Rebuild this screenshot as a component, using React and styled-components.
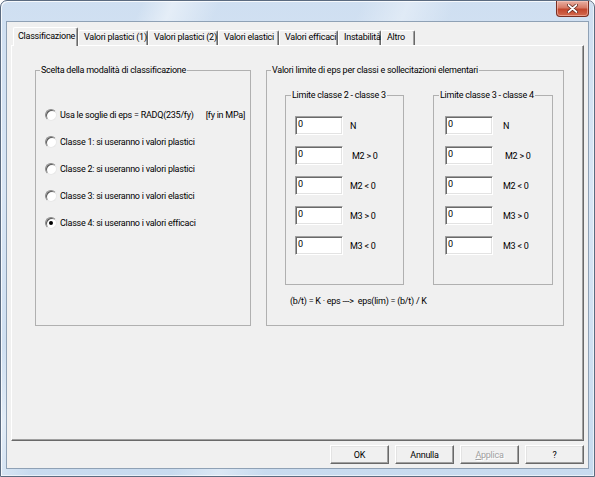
import React from "react";
import styled, { createGlobalStyle } from "styled-components";

const FONT = `Roboto, "Liberation Sans", Arial, sans-serif`;

const GlobalStyle = createGlobalStyle`
  html, body {
    margin: 0;
    padding: 0;
    overflow: hidden;
    background: #fff;
  }
  body {
    font-family: ${FONT};
    font-size: 9px;
    letter-spacing: -0.25px;
    color: #000;
  }
`;

const Window = styled.div`
  box-sizing: border-box;
  width: 595px;
  height: 477px;
  display: flex;
  flex-direction: column;
  padding: 0 5px 7px 5px;
  border: 1px solid #5b6b80;
  border-radius: 7px 7px 0 0;
  background: linear-gradient(
      112deg,
      rgba(255, 255, 255, 0) 0 18%,
      rgba(255, 255, 255, 0.45) 22%,
      rgba(255, 255, 255, 0) 28%,
      rgba(255, 255, 255, 0) 46%,
      rgba(255, 255, 255, 0.35) 52%,
      rgba(255, 255, 255, 0) 58%,
      rgba(255, 255, 255, 0) 100%
    ),
    linear-gradient(#cfdff1, #d9e6f5 40%, #c8dbef);
  box-shadow: inset 1px 1px 0 rgba(255, 255, 255, 0.8),
    inset -1px -1px 0 rgba(255, 255, 255, 0.6);
`;

const TitleBar = styled.div`
  height: 20px;
  display: flex;
  justify-content: flex-end;
  align-items: flex-start;
`;

const CloseButton = styled.div`
  box-sizing: border-box;
  width: 33px;
  height: 16px;
  display: flex;
  align-items: center;
  justify-content: center;
  border: 1px solid #7a2f22;
  border-top: none;
  border-radius: 0 0 4px 4px;
  background: linear-gradient(#e8b0a3, #d77a66 45%, #c2462d 55%, #d36a4e);
  box-shadow: inset 0 0 0 1px rgba(255, 210, 200, 0.5);
`;

const Client = styled.div`
  flex: 1;
  display: flex;
  flex-direction: column;
  border: 1px solid #8fa1b5;
  background: #f0f0f0;
`;

const TabStrip = styled.div`
  height: 23px;
  display: flex;
  align-items: flex-end;
  padding-left: 6px;
`;

const Tab = styled.div`
  box-sizing: border-box;
  position: relative;
  z-index: ${(p) => (p.$active ? 1 : 0)};
  width: ${(p) => p.$w}px;
  height: ${(p) => (p.$active ? 19 : 15)}px;
  margin-bottom: ${(p) => (p.$active ? -1 : 0)}px;
  padding: ${(p) => (p.$active ? "3px 0 0 4px" : "1px 0 0 5px")};
  line-height: 11px;
  white-space: nowrap;
  background: #f0f0f0;
  border-top: 1px solid #fff;
  border-left: 1px solid #fff;
  border-right: 1px solid #696969;
  border-radius: 2px 2px 0 0;
  box-shadow: inset -1px 0 0 #a0a0a0;
`;

const Panel = styled.div`
  box-sizing: border-box;
  height: 396px;
  margin: 0 4px;
  padding: 18px 0 0 23px;
  display: flex;
  align-items: flex-start;
  gap: 15px;
  border-top: 1px solid #fff;
  border-left: 1px solid #fff;
  border-right: 1px solid #696969;
  border-bottom: 1px solid #696969;
  box-shadow: inset -1px -1px 0 #a0a0a0;
`;

const Group = styled.fieldset`
  box-sizing: border-box;
  margin: 0;
  padding: 0;
  min-width: 0;
  width: ${(p) => p.$w}px;
  height: ${(p) => p.$h}px;
  border: 1px solid #b0b0b0;
`;

const Legend = styled.legend`
  margin-left: ${(p) => p.$indent || 4}px;
  padding: 0 1px;
  line-height: 12px;
  white-space: nowrap;
`;

const RadioList = styled.div`
  display: flex;
  flex-direction: column;
  gap: 13px;
  padding: 32px 0 0 9px;
`;

const RadioRow = styled.label`
  display: flex;
  align-items: center;
  gap: 3px;
  height: 14px;
  white-space: nowrap;
`;

const RadioMark = styled.span`
  box-sizing: border-box;
  flex-shrink: 0;
  width: 12px;
  height: 12px;
  display: flex;
  align-items: center;
  justify-content: center;
  border-radius: 50%;
  background: #fff;
  border: 1px solid;
  border-color: #8a8a8a #e8e8e8 #e8e8e8 #8a8a8a;
  box-shadow: inset 1px 1px 0 #5a5a5a;

  &::after {
    content: "";
    width: 4px;
    height: 4px;
    border-radius: 50%;
    background: ${(p) => (p.$checked ? "#000" : "transparent")};
  }
`;

const Hint = styled.span`
  margin-left: 9px;
`;

const InnerRow = styled.div`
  display: flex;
  gap: 29px;
  padding: 13px 0 0 18px;
`;

const FieldList = styled.div`
  display: flex;
  flex-direction: column;
  gap: 11px;
  padding: 15px 0 0 ${(p) => p.$inset}px;
`;

const FieldRow = styled.div`
  display: flex;
  align-items: center;
  height: 19px;
`;

const TextBox = styled.input`
  box-sizing: border-box;
  width: 48px;
  height: 19px;
  margin: 0;
  padding: 0 0 3px 2px;
  font: inherit;
  letter-spacing: inherit;
  color: #000;
  background: #fff;
  border: 1px solid;
  border-color: #a0a0a0 #fff #fff #a0a0a0;
  box-shadow: inset 1px 1px 0 #696969, inset -1px -1px 0 #e3e3e3;
  outline: none;
`;

const FieldLabel = styled.span`
  margin-left: ${(p) => p.$gap}px;
  white-space: nowrap;
`;

const Formula = styled.div`
  margin-top: 10px;
  padding-left: 23px;
  line-height: 12px;
  white-space: pre;
`;

const ButtonRow = styled.div`
  display: flex;
  justify-content: flex-end;
  gap: 6px;
  margin-top: 4px;
  padding-right: 4px;
`;

const Button = styled.button`
  box-sizing: border-box;
  width: 59px;
  height: 19px;
  margin: 0;
  padding: 0;
  font: inherit;
  letter-spacing: inherit;
  color: ${(p) => (p.disabled ? "#a0a0a0" : "#000")};
  text-shadow: ${(p) => (p.disabled ? "1px 1px 0 #fff" : "none")};
  background: #f0f0f0;
  border: 1px solid;
  border-color: #fff #696969 #696969 #fff;
  box-shadow: inset -1px -1px 0 #a0a0a0, inset 1px 1px 0 #e3e3e3;

  u {
    text-decoration: underline;
  }
`;

const tabs = [
  { label: "Classificazione", w: 65 },
  { label: "Valori plastici (1)", w: 70 },
  { label: "Valori plastici (2)", w: 70 },
  { label: "Valori elastici", w: 61 },
  { label: "Valori efficaci", w: 59 },
  { label: "Instabilità", w: 43 },
  { label: "Altro", w: 34 },
];

const modes = [
  "Usa le soglie di eps = RADQ(235/fy)",
  "Classe 1: si useranno i valori plastici",
  "Classe 2: si useranno i valori plastici",
  "Classe 3: si useranno i valori elastici",
  "Classe 4: si useranno i valori efficaci",
];

const fields = [
  { label: "N", shift: 0 },
  { label: "M2 > 0", shift: 2 },
  { label: "M2 < 0", shift: 0 },
  { label: "M3 > 0", shift: 0 },
  { label: "M3 < 0", shift: 0 },
];

const LimitGroup = ({ title, width, inset, gap }) => (
  <Group $w={width} $h={196}>
    <Legend $indent={5}>{title}</Legend>
    <FieldList $inset={inset}>
      {fields.map((f) => (
        <FieldRow key={f.label}>
          <TextBox defaultValue="0" readOnly />
          <FieldLabel $gap={gap + f.shift}>{f.label}</FieldLabel>
        </FieldRow>
      ))}
    </FieldList>
  </Group>
);

const App = () => (
  <>
    <GlobalStyle />
    <Window>
      <TitleBar>
        <CloseButton>
          <svg width="11" height="9" viewBox="0 0 11 9">
            <path d="M1.5 1 L9.5 8 M9.5 1 L1.5 8" stroke="#5a2218" strokeWidth="3.2" strokeLinecap="round" />
            <path d="M1.5 1 L9.5 8 M9.5 1 L1.5 8" stroke="#fff" strokeWidth="1.7" strokeLinecap="round" />
          </svg>
        </CloseButton>
      </TitleBar>
      <Client>
        <TabStrip>
          {tabs.map((t, i) => (
            <Tab key={t.label} $w={t.w} $active={i === 0}>
              {t.label}
            </Tab>
          ))}
        </TabStrip>
        <Panel>
          <Group $w={216} $h={262}>
            <Legend>Scelta della modalità di classificazione</Legend>
            <RadioList>
              {modes.map((m, i) => (
                <RadioRow key={m}>
                  <RadioMark $checked={i === 4} />
                  {m}
                  {i === 0 && <Hint>[fy in MPa]</Hint>}
                </RadioRow>
              ))}
            </RadioList>
          </Group>
          <Group $w={298} $h={262}>
            <Legend>Valori limite di eps per classi e sollecitazioni elementari</Legend>
            <InnerRow>
              <LimitGroup title="Limite classe 2 - classe 3" width={119} inset={9} gap={7} />
              <LimitGroup title="Limite classe 3 - classe 4" width={120} inset={11} gap={10} />
            </InnerRow>
            <Formula>{"(b/t) = K · eps --->  eps(lim) = (b/t) / K"}</Formula>
          </Group>
        </Panel>
        <ButtonRow>
          <Button>OK</Button>
          <Button>Annulla</Button>
          <Button disabled>
            <u>A</u>pplica
          </Button>
          <Button>?</Button>
        </ButtonRow>
      </Client>
    </Window>
  </>
);

export default App;
